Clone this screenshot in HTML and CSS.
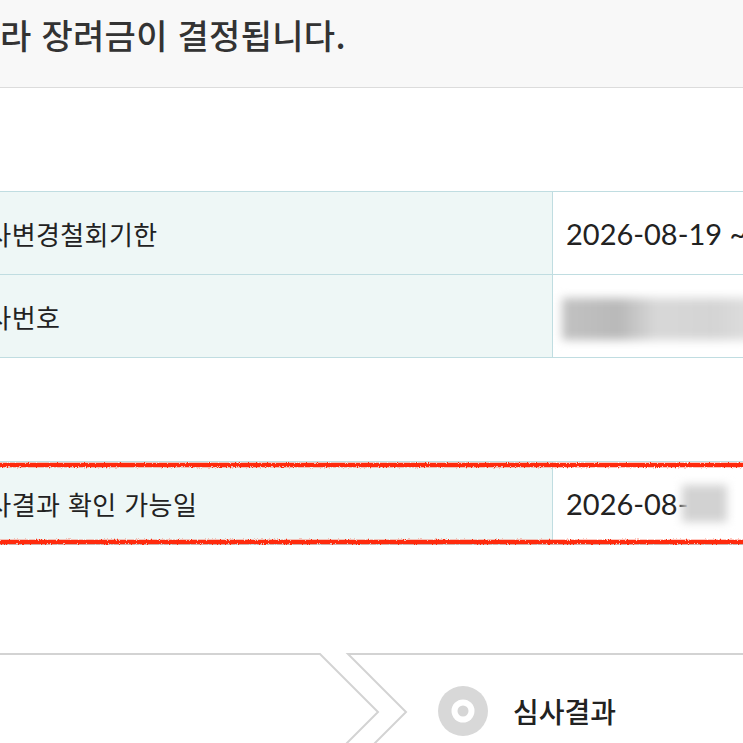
FILE: index.html
```html
<!DOCTYPE html>
<html lang="ko">
<head>
    <meta charset="UTF-8">
    <meta name="viewport" content="width=device-width, initial-scale=1.0">
    <title>심사결과 안내</title>
    <link rel="stylesheet" href="styles.css">
</head>
<body>
    <!-- 안내 문구 -->
    <div class="notice">라 장려금이 결정됩니다.</div>

    <!-- 신청 정보 -->
    <div class="info-table">
        <div class="row">
            <div class="label">심사변경철회기한</div>
            <div class="value">2026-08-19 ~ 2026-09-18</div>
        </div>
        <div class="row">
            <div class="label">심사번호</div>
            <div class="value"><span class="blur blur-wide"></span></div>
        </div>
    </div>

    <!-- 결과 확인일 (강조) -->
    <div class="info-table marked">
        <div class="row">
            <div class="label">심사결과 확인 가능일</div>
            <div class="value">2026-08-<span class="blur blur-small"></span></div>
        </div>
        <svg class="marker" width="100%" height="83" preserveAspectRatio="none">
            <defs>
                <filter id="rough">
                    <feTurbulence type="fractalNoise" baseFrequency="0.9" numOctaves="2" seed="3"/>
                    <feDisplacementMap in="SourceGraphic" scale="3"/>
                </filter>
            </defs>
            <g filter="url(#rough)" stroke="#ff2a0c" stroke-width="4.5" fill="none">
                <line x1="0" y1="3" x2="100%" y2="3"/>
                <line x1="0" y1="80" x2="100%" y2="80"/>
            </g>
        </svg>
    </div>

    <!-- 진행 단계 -->
    <div class="steps">
        <svg class="steps-line" width="743" height="100">
            <g stroke="#d3d3d3" stroke-width="2" fill="none">
                <path d="M-10 1 H320 L378 59 L320 117"/>
                <path d="M760 1 H348 L406 59 L348 117"/>
            </g>
        </svg>
        <div class="step current">
            <svg class="step-icon" width="50" height="50" viewBox="0 0 50 50">
                <circle cx="25" cy="25" r="25" fill="#d8d8d8"/>
                <circle cx="25" cy="25" r="11.5" fill="#fff"/>
                <circle cx="25" cy="25" r="5.5" fill="#d6d6d6"/>
            </svg>
            <span>심사결과</span>
        </div>
    </div>
</body>
</html>
```

FILE: styles.css
```css
html, body {
    overflow: hidden;
}
body {
    margin: 0;
    font-family: Lato, "Noto Sans CJK KR", sans-serif;
    color: #222;
    background: #fff;
}
.notice {
    height: 88px;
    box-sizing: border-box;
    padding-top: 14px;
    line-height: 42px;
    font-family: "Noto Sans CJK KR", sans-serif;
    font-size: 34px;
    font-weight: 500;
    letter-spacing: 0.3px;
    color: #333;
    background-color: #f8f8f8;
    border-bottom: 1px solid #dcdcdc;
    white-space: nowrap;
}
.info-table {
    margin-top: 103px;
    margin-left: -57px;
    width: 1100px;
    border-top: 1px solid #c0dde1;
}
.row {
    display: grid;
    grid-template-columns: 610px 1fr;
    height: 83px;
    box-sizing: border-box;
    border-bottom: 1px solid #c0dde1;
}
.label {
    display: flex;
    align-items: center;
    padding-left: 20px;
    background-color: #eef7f6;
    border-right: 1px solid #c0dde1;
    font-family: "Noto Sans CJK KR", sans-serif;
    font-size: 26px;
    letter-spacing: 0.4px;
    white-space: nowrap;
}
.value {
    display: flex;
    align-items: center;
    padding-left: 13px;
    font-size: 29px;
    white-space: nowrap;
}
.blur {
    display: inline-block;
    filter: blur(5px);
}
.blur-wide {
    width: 190px;
    height: 42px;
    margin-left: -4px;
    margin-top: 5px;
    background: linear-gradient(90deg, #c2c2c2, #b9b9b9 30%, #d8d8d8 50%, #d4d4d4 80%, #dedede);
}
.blur-small {
    width: 45px;
    height: 37px;
    margin-left: -6px;
    background: #d2d2d2;
}
.marked {
    position: relative;
}
.marker {
    position: absolute;
    top: 0;
    left: 0;
}
.steps {
    position: relative;
    margin-top: 108px;
    height: 116px;
}
.steps-line {
    position: absolute;
    top: 0;
    left: 0;
}
.step {
    position: relative;
    display: flex;
    align-items: center;
    height: 116px;
    font-family: "Noto Sans CJK KR", sans-serif;
    font-size: 28px;
    font-weight: 500;
}
.step.current {
    margin-left: 438px;
}
.step-icon {
    margin-right: 25px;
}
```
